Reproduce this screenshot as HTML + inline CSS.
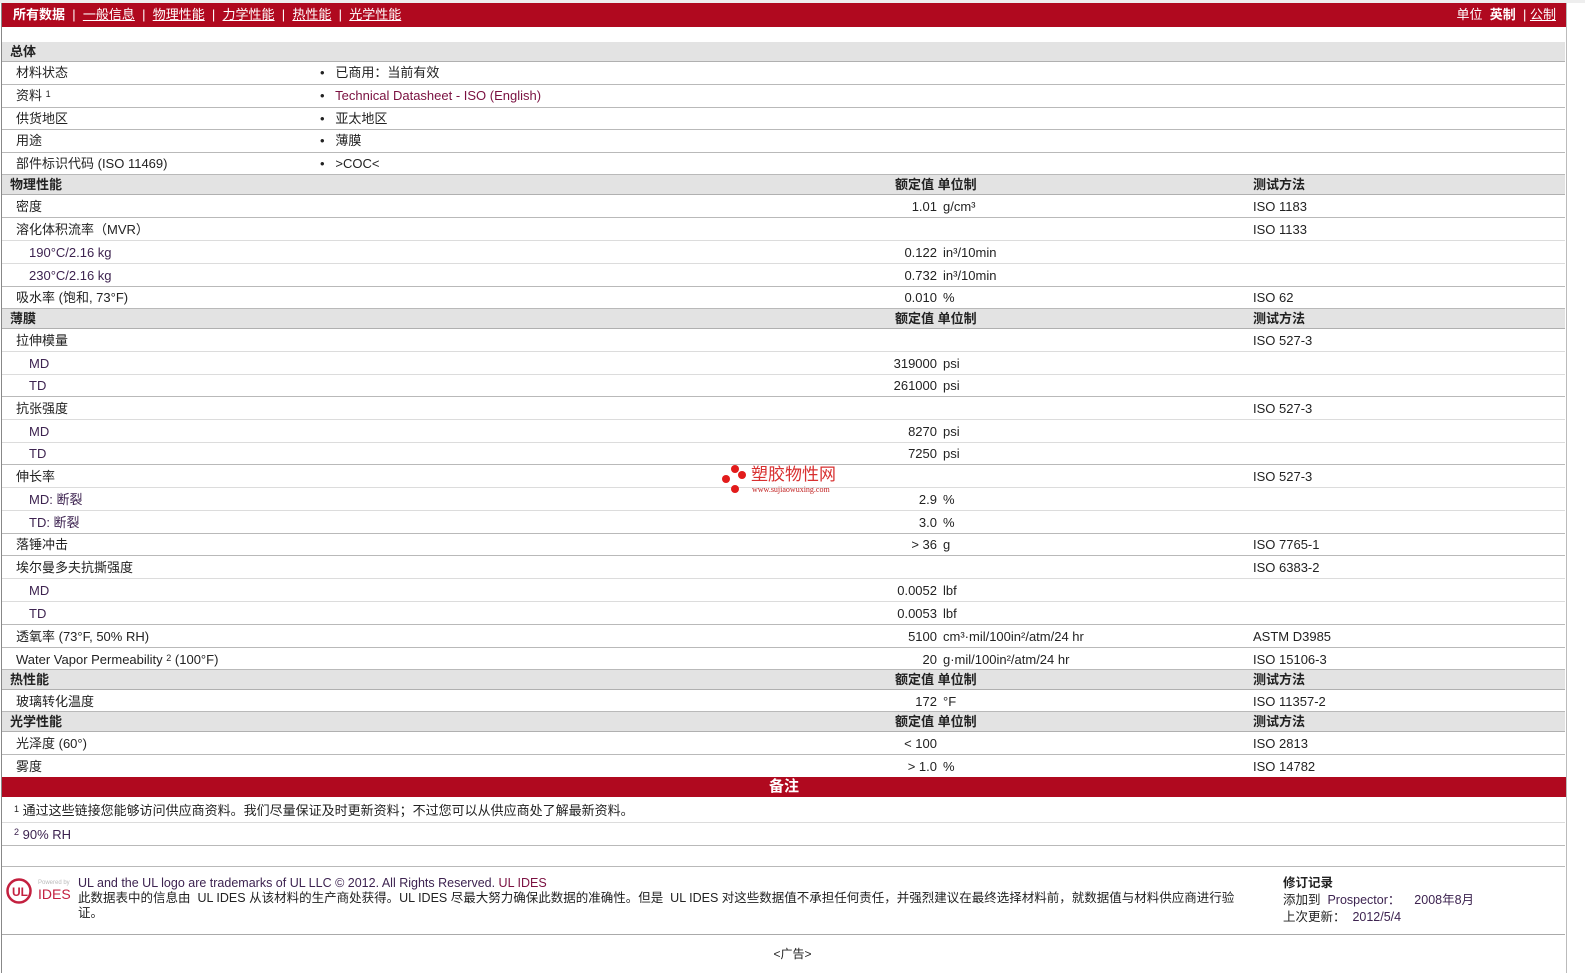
<!DOCTYPE html>
<html><head><meta charset="utf-8"><style>
*{margin:0;padding:0;box-sizing:border-box}
body{width:1585px;height:973px;background:#fff;font-family:"Liberation Sans","Noto Sans CJK SC",sans-serif;font-size:13px;color:#222;position:relative;overflow:hidden}
.bar{position:absolute;left:2px;width:1564px;top:3px;height:24px;background:#b0091f;color:#fff;font-size:13px;line-height:24px}
.bar a{color:#fff;text-decoration:underline}
.r{position:absolute;left:2px;width:1563px;border-bottom:1px solid #b9b9b9}
.s{border-bottom:1px solid #dcdcdc}
.h{background:#e3e3e3;font-weight:bold;border-bottom:1px solid #b0b0b0}
.r span{position:absolute;white-space:nowrap}
.l{left:14px}.i{left:27px;color:#3d2350}
.b{left:318px}
.v{right:628px;text-align:right}
.u{left:941px}
.t{left:1251px}
.hv{left:893px}
.ht{left:1251px}
.pur{color:#7a1040}
sup{font-size:9px;position:relative;top:-2px;vertical-align:top}
</style></head><body>
<div style="position:absolute;left:0;top:0;width:1585px;height:3px;background:#eee"></div>
<div style="position:absolute;left:1px;top:3px;width:1px;height:970px;background:#888"></div>
<div style="position:absolute;left:1566px;top:3px;width:1px;height:970px;background:#bbb"></div>
<div class="bar"><span style="position:absolute;left:11px"><b>所有数据</b> &nbsp;| &nbsp;<a>一般信息</a> &nbsp;| &nbsp;<a>物理性能</a> &nbsp;| &nbsp;<a>力学性能</a> &nbsp;| &nbsp;<a>热性能</a> &nbsp;| &nbsp;<a>光学性能</a></span><span style="position:absolute;right:10px">单位 &nbsp;<b>英制</b> &nbsp;| <a>公制</a></span></div>

<div class="r h" style="top:42px;height:20px;line-height:19px"><span style="left:8px">总体</span></div>
<div class="r" style="top:62px;height:23px;line-height:22px"><span class="l">材料状态</span><span class="b">•&nbsp;&nbsp; 已商用：当前有效</span></div>
<div class="r" style="top:85px;height:23px;line-height:22px"><span class="l">资料 <sup>1</sup></span><span class="b">•&nbsp;&nbsp; <span class="pur" style="position:static">Technical Datasheet - ISO (English)</span></span></div>
<div class="r" style="top:108px;height:22px;line-height:21px"><span class="l">供货地区</span><span class="b">•&nbsp;&nbsp; 亚太地区</span></div>
<div class="r" style="top:130px;height:23px;line-height:22px"><span class="l">用途</span><span class="b">•&nbsp;&nbsp; 薄膜</span></div>
<div class="r" style="top:153px;height:22px;line-height:22px"><span class="l">部件标识代码 (ISO 11469)</span><span class="b">•&nbsp;&nbsp; &gt;COC&lt;</span></div>

<div class="r h" style="top:175px;height:20px;line-height:19px"><span style="left:8px">物理性能</span><span class="hv">额定值 单位制</span><span class="ht">测试方法</span></div>
<div class="r" style="top:195px;height:23px;line-height:24px"><span class="l">密度</span><span class="v">1.01</span><span class="u">g/cm³</span><span class="t">ISO 1183</span></div>
<div class="r s" style="top:218px;height:23px;line-height:23px"><span class="l">溶化体积流率（MVR）</span><span class="t">ISO 1133</span></div>
<div class="r s" style="top:241px;height:23px;line-height:23px"><span class="i">190°C/2.16 kg</span><span class="v">0.122</span><span class="u">in³/10min</span></div>
<div class="r" style="top:264px;height:23px;line-height:23px"><span class="i">230°C/2.16 kg</span><span class="v">0.732</span><span class="u">in³/10min</span></div>
<div class="r" style="top:287px;height:22px;line-height:22px"><span class="l">吸水率 (饱和, 73°F)</span><span class="v">0.010</span><span class="u">%</span><span class="t">ISO 62</span></div>

<div class="r h" style="top:309px;height:20px;line-height:19px"><span style="left:8px">薄膜</span><span class="hv">额定值 单位制</span><span class="ht">测试方法</span></div>
<div class="r s" style="top:329px;height:23px;line-height:23px"><span class="l">拉伸模量</span><span class="t">ISO 527-3</span></div>
<div class="r s" style="top:352px;height:23px;line-height:23px"><span class="i">MD</span><span class="v">319000</span><span class="u">psi</span></div>
<div class="r" style="top:375px;height:22px;line-height:22px"><span class="i">TD</span><span class="v">261000</span><span class="u">psi</span></div>
<div class="r s" style="top:397px;height:23px;line-height:23px"><span class="l">抗张强度</span><span class="t">ISO 527-3</span></div>
<div class="r s" style="top:420px;height:23px;line-height:23px"><span class="i">MD</span><span class="v">8270</span><span class="u">psi</span></div>
<div class="r" style="top:443px;height:22px;line-height:22px"><span class="i">TD</span><span class="v">7250</span><span class="u">psi</span></div>
<div class="r s" style="top:465px;height:23px;line-height:23px"><span class="l">伸长率</span><span class="t">ISO 527-3</span></div>
<div class="r s" style="top:488px;height:23px;line-height:23px"><span class="i">MD: 断裂</span><span class="v">2.9</span><span class="u">%</span></div>
<div class="r" style="top:511px;height:23px;line-height:23px"><span class="i">TD: 断裂</span><span class="v">3.0</span><span class="u">%</span></div>
<div class="r" style="top:534px;height:22px;line-height:22px"><span class="l">落锤冲击</span><span class="v">&gt; 36</span><span class="u">g</span><span class="t">ISO 7765-1</span></div>
<div class="r s" style="top:556px;height:23px;line-height:23px"><span class="l">埃尔曼多夫抗撕强度</span><span class="t">ISO 6383-2</span></div>
<div class="r s" style="top:579px;height:23px;line-height:23px"><span class="i">MD</span><span class="v">0.0052</span><span class="u">lbf</span></div>
<div class="r" style="top:602px;height:23px;line-height:23px"><span class="i">TD</span><span class="v">0.0053</span><span class="u">lbf</span></div>
<div class="r" style="top:625px;height:23px;line-height:23px"><span class="l">透氧率 (73°F, 50% RH)</span><span class="v">5100</span><span class="u">cm³·mil/100in²/atm/24 hr</span><span class="t">ASTM D3985</span></div>
<div class="r" style="top:648px;height:22px;line-height:24px"><span class="l">Water Vapor Permeability <sup>2</sup> (100°F)</span><span class="v">20</span><span class="u">g·mil/100in²/atm/24 hr</span><span class="t">ISO 15106-3</span></div>

<div class="r h" style="top:670px;height:20px;line-height:19px"><span style="left:8px">热性能</span><span class="hv">额定值 单位制</span><span class="ht">测试方法</span></div>
<div class="r" style="top:690px;height:22px;line-height:23px"><span class="l">玻璃转化温度</span><span class="v">172</span><span class="u">°F</span><span class="t">ISO 11357-2</span></div>
<div class="r h" style="top:712px;height:20px;line-height:19px"><span style="left:8px">光学性能</span><span class="hv">额定值 单位制</span><span class="ht">测试方法</span></div>
<div class="r" style="top:732px;height:23px;line-height:24px"><span class="l">光泽度 (60°)</span><span class="v">&lt; 100</span><span class="t">ISO 2813</span></div>
<div class="r" style="top:755px;height:22px;line-height:24px;border:none"><span class="l">雾度</span><span class="v">&gt; 1.0</span><span class="u">%</span><span class="t">ISO 14782</span></div>

<div style="position:absolute;left:2px;width:1564px;top:777px;height:20px;background:#b0091f;color:#fff;font-weight:bold;font-size:15px;text-align:center;line-height:20px">备注</div>
<div class="r s" style="top:797px;height:26px;line-height:28px"><span style="left:12px"><sup>1</sup> 通过这些链接您能够访问供应商资料。我们尽量保证及时更新资料；不过您可以从供应商处了解最新资料。</span></div>
<div class="r" style="top:823px;height:23px;line-height:23px"><span style="left:12px;color:#3d2350"><sup>2</sup> 90% RH</span></div>
<div class="r" style="top:846px;height:21px"></div>
<div class="r" style="top:867px;height:68px;border-bottom:1px solid #aaa;font-size:12.5px">
 <svg style="position:absolute;left:4px;top:10px" width="68" height="28" viewBox="0 0 68 28"><circle cx="13" cy="14" r="11.5" fill="none" stroke="#c3203f" stroke-width="2.5"/><text x="6" y="19" font-family="Liberation Sans" font-weight="bold" font-size="12" fill="#c3203f">UL</text><text x="32" y="7" font-family="Liberation Sans" font-size="6" fill="#bbb">Powered by</text><text x="32" y="22" font-family="Liberation Sans" font-size="14" fill="#c3203f">IDES</text></svg>
 <span style="left:76px;top:9px;line-height:15px;color:#3d2350">UL and the UL logo are trademarks of UL LLC © 2012. All Rights Reserved. <span class="pur" style="position:static">UL IDES</span><br><span style="position:static;color:#222">此数据表中的信息由 &nbsp;UL IDES 从该材料的生产商处获得。UL IDES 尽最大努力确保此数据的准确性。但是 &nbsp;UL IDES 对这些数据值不承担任何责任，并强烈建议在最终选择材料前，就数据值与材料供应商进行验<br>证。</span></span>
 <span style="left:1281px;top:8px;line-height:17px"><b>修订记录</b><br>添加到 &nbsp;<span style="position:static;color:#3d2350">Prospector：&nbsp;&nbsp;&nbsp; 2008年8月</span><br>上次更新： &nbsp;<span style="position:static;color:#3d2350">2012/5/4</span></span>
</div>
<div style="position:absolute;left:0;width:1585px;top:945px;text-align:center;font-size:12px">&lt;广告&gt;</div>

<div style="position:absolute;left:721px;top:465px">
 <div style="position:absolute;left:10px;top:0;width:8px;height:8px;border-radius:50%;background:#e21b1b"></div>
 <div style="position:absolute;left:17px;top:6px;width:8px;height:8px;border-radius:50%;background:#e21b1b"></div>
 <div style="position:absolute;left:1px;top:10px;width:8px;height:8px;border-radius:50%;background:#e21b1b"></div>
 <div style="position:absolute;left:10px;top:20px;width:8px;height:8px;border-radius:50%;background:#e21b1b"></div>
 <span style="position:absolute;left:30px;top:1px;font-size:17px;color:#d83030;white-space:nowrap;line-height:18px">塑胶物性网</span>
 <span style="position:absolute;left:31px;top:20px;font-size:8px;color:#c02020;font-family:'Liberation Serif',serif;white-space:nowrap">www.sujiaowuxing.com</span>
</div>
</body></html>
